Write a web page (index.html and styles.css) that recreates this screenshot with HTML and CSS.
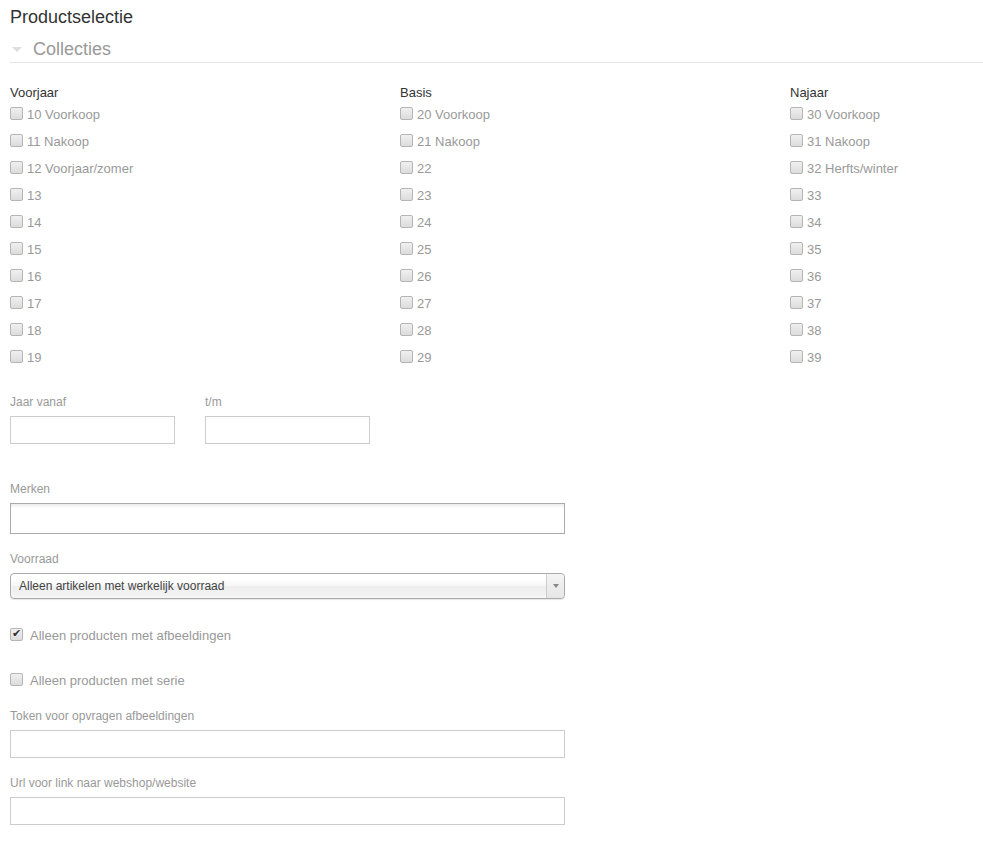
FILE: index.html
```html
<!DOCTYPE html>
<html lang="nl">
<head>
    <meta charset="UTF-8">
    <meta name="viewport" content="width=device-width, initial-scale=1.0">
    <title>Productselectie</title>
    <link rel="stylesheet" href="styles.css">
</head>
<body>
    <h1>Productselectie</h1>
    <div class="section-head"><span class="caret"></span>Collecties</div>

    <div class="collections">
        <div class="col">
            <div class="col-title">Voorjaar</div>
            <label class="check"><input type="checkbox"><span>10 Voorkoop</span></label>
            <label class="check"><input type="checkbox"><span>11 Nakoop</span></label>
            <label class="check"><input type="checkbox"><span>12 Voorjaar/zomer</span></label>
            <label class="check"><input type="checkbox"><span>13</span></label>
            <label class="check"><input type="checkbox"><span>14</span></label>
            <label class="check"><input type="checkbox"><span>15</span></label>
            <label class="check"><input type="checkbox"><span>16</span></label>
            <label class="check"><input type="checkbox"><span>17</span></label>
            <label class="check"><input type="checkbox"><span>18</span></label>
            <label class="check"><input type="checkbox"><span>19</span></label>
        </div>
        <div class="col">
            <div class="col-title">Basis</div>
            <label class="check"><input type="checkbox"><span>20 Voorkoop</span></label>
            <label class="check"><input type="checkbox"><span>21 Nakoop</span></label>
            <label class="check"><input type="checkbox"><span>22</span></label>
            <label class="check"><input type="checkbox"><span>23</span></label>
            <label class="check"><input type="checkbox"><span>24</span></label>
            <label class="check"><input type="checkbox"><span>25</span></label>
            <label class="check"><input type="checkbox"><span>26</span></label>
            <label class="check"><input type="checkbox"><span>27</span></label>
            <label class="check"><input type="checkbox"><span>28</span></label>
            <label class="check"><input type="checkbox"><span>29</span></label>
        </div>
        <div class="col">
            <div class="col-title">Najaar</div>
            <label class="check"><input type="checkbox"><span>30 Voorkoop</span></label>
            <label class="check"><input type="checkbox"><span>31 Nakoop</span></label>
            <label class="check"><input type="checkbox"><span>32 Herfts/winter</span></label>
            <label class="check"><input type="checkbox"><span>33</span></label>
            <label class="check"><input type="checkbox"><span>34</span></label>
            <label class="check"><input type="checkbox"><span>35</span></label>
            <label class="check"><input type="checkbox"><span>36</span></label>
            <label class="check"><input type="checkbox"><span>37</span></label>
            <label class="check"><input type="checkbox"><span>38</span></label>
            <label class="check"><input type="checkbox"><span>39</span></label>
        </div>
    </div>

    <div class="year-row">
        <div class="field">
            <label for="jaarVan">Jaar vanaf</label>
            <input type="text" id="jaarVan" class="input small">
        </div>
        <div class="field">
            <label for="jaarTm">t/m</label>
            <input type="text" id="jaarTm" class="input small">
        </div>
    </div>

    <div class="field merken">
        <label for="merken">Merken</label>
        <input type="text" id="merken" class="input wide tags">
    </div>

    <div class="field voorraad">
        <label>Voorraad</label>
        <div class="chosen">
            <span class="chosen-text">Alleen artikelen met werkelijk voorraad</span>
            <div class="chosen-arrow"><span></span></div>
        </div>
    </div>

    <label class="check option first"><input type="checkbox" checked><span>Alleen producten met afbeeldingen</span></label>
    <label class="check option second"><input type="checkbox"><span>Alleen producten met serie</span></label>

    <div class="field token">
        <label for="token">Token voor opvragen afbeeldingen</label>
        <input type="text" id="token" class="input wide">
    </div>

    <div class="field url">
        <label for="url">Url voor link naar webshop/website</label>
        <input type="text" id="url" class="input wide">
    </div>
</body>
</html>
```

FILE: styles.css
```css
body {
    margin: 0;
    padding: 7px 0 20px 10px;
    font-family: "Liberation Sans", Arial, sans-serif;
    color: #333;
    background-color: #fff;
}
h1 {
    margin: 0;
    font-size: 18px;
    font-weight: normal;
    line-height: 20px;
    color: #333;
}
.section-head {
    display: flex;
    align-items: center;
    margin-top: 11px;
    padding-top: 1px;
    padding-bottom: 3px;
    border-bottom: 1px solid #e5e5e5;
    font-size: 18px;
    line-height: 20px;
    color: #999;
}
.caret {
    width: 0;
    height: 0;
    margin: 1px 11px 0 2px;
    border-left: 5px solid transparent;
    border-right: 5px solid transparent;
    border-top: 5px solid #ddd;
}
.collections {
    display: grid;
    grid-template-columns: 390px 390px 1fr;
    margin-top: 21px;
}
.col-title {
    font-size: 13px;
    line-height: 17px;
    color: #333;
}
.check {
    display: flex;
    align-items: center;
    height: 27px;
    font-size: 13px;
    color: #999;
}
.check input {
    -webkit-appearance: none;
    appearance: none;
    position: relative;
    width: 13px;
    height: 13px;
    margin: -2px 4px 0 0;
    border: 1px solid #b5b5b5;
    border-radius: 2px;
    background: linear-gradient(#f0f0f0, #dcdcdc);
}
.check input:checked::after {
    content: "\2714";
    position: absolute;
    left: 1px;
    top: -2px;
    font-size: 11px;
    color: #333;
}
.option input {
    margin-right: 7px;
}
.option.first {
    margin-top: 23px;
}
.option.second {
    margin-top: 18px;
}
.field label {
    display: block;
    font-size: 12px;
    line-height: 14px;
    color: #999;
    margin-bottom: 7px;
}
.year-row {
    display: flex;
    gap: 30px;
    margin-top: 24px;
}
.input {
    box-sizing: border-box;
    height: 28px;
    border: 1px solid #ccc;
    padding: 4px 6px;
    font-size: 12px;
    font-family: inherit;
    margin: 0;
}
.input.small {
    width: 165px;
}
.input.wide {
    width: 555px;
    display: block;
}
.input.tags {
    height: 31px;
    border-color: #aaa;
    background: linear-gradient(#eee 1%, #fff 15%);
}
.merken {
    margin-top: 38px;
}
.voorraad {
    margin-top: 18px;
}
.chosen {
    box-sizing: border-box;
    display: flex;
    align-items: center;
    width: 555px;
    height: 26px;
    border: 1px solid #aaa;
    border-radius: 4px;
    background: linear-gradient(#fff 20%, #f6f6f6 50%, #eee 52%, #f4f4f4);
    box-shadow: 0 0 3px #fff inset, 0 1px 1px rgba(0, 0, 0, 0.1);
    font-size: 12px;
    color: #444;
}
.chosen-text {
    flex: 1;
    padding-left: 8px;
}
.chosen-arrow {
    display: flex;
    align-items: center;
    justify-content: center;
    width: 17px;
    height: 100%;
    border-left: 1px solid #ccc;
    border-radius: 0 4px 4px 0;
    background: linear-gradient(#f4f4f4, #e6e6e6);
}
.chosen-arrow span {
    width: 0;
    height: 0;
    border-left: 3px solid transparent;
    border-right: 3px solid transparent;
    border-top: 4px solid #888;
}
.token {
    margin-top: 15px;
}
.url {
    margin-top: 18px;
}
```
